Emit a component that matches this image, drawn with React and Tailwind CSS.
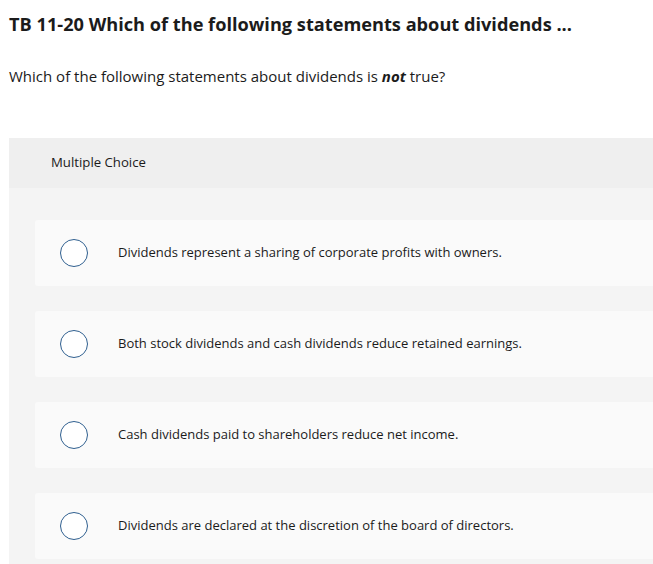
import React from "react";

const choices = [
  "Dividends represent a sharing of corporate profits with owners.",
  "Both stock dividends and cash dividends reduce retained earnings.",
  "Cash dividends paid to shareholders reduce net income.",
  "Dividends are declared at the discretion of the board of directors.",
];

function Choice({ text }) {
  return (
    <div className="flex h-[66px] items-center rounded-l-[3px] bg-[#fafafa] pl-[25px]">
      <span className="h-[28px] w-[28px] shrink-0 rounded-full border-[1.5px] border-[#2f5f8f] bg-white" />
      <span className="ml-[30px] text-[13px] text-[#1b1b1b]">{text}</span>
    </div>
  );
}

export default function App() {
  return (
    <div className="min-h-[564px] w-[653px] overflow-hidden bg-white font-['Open_Sans',sans-serif] text-[#1b1b1b]">
      <h1 className="ml-[9px] pt-[12px] text-[18.2px] font-bold leading-[24px]">
        TB 11-20 Which of the following statements about dividends ...
      </h1>
      <p className="ml-[9px] mt-[29px] text-[15px] leading-[22px]">
        Which of the following statements about dividends is <b><i>not</i></b> true?
      </p>
      <div className="ml-[9px] mt-[51px] w-[660px]">
        <div className="flex h-[50px] items-center bg-[#efefef] pl-[42px] text-[13.2px]">
          Multiple Choice
        </div>
        <div className="flex flex-col gap-[25px] bg-[#f4f4f4] pb-[10px] pl-[26px] pt-[32px]">
          {choices.map((c) => (
            <Choice key={c} text={c} />
          ))}
        </div>
      </div>
    </div>
  );
}
